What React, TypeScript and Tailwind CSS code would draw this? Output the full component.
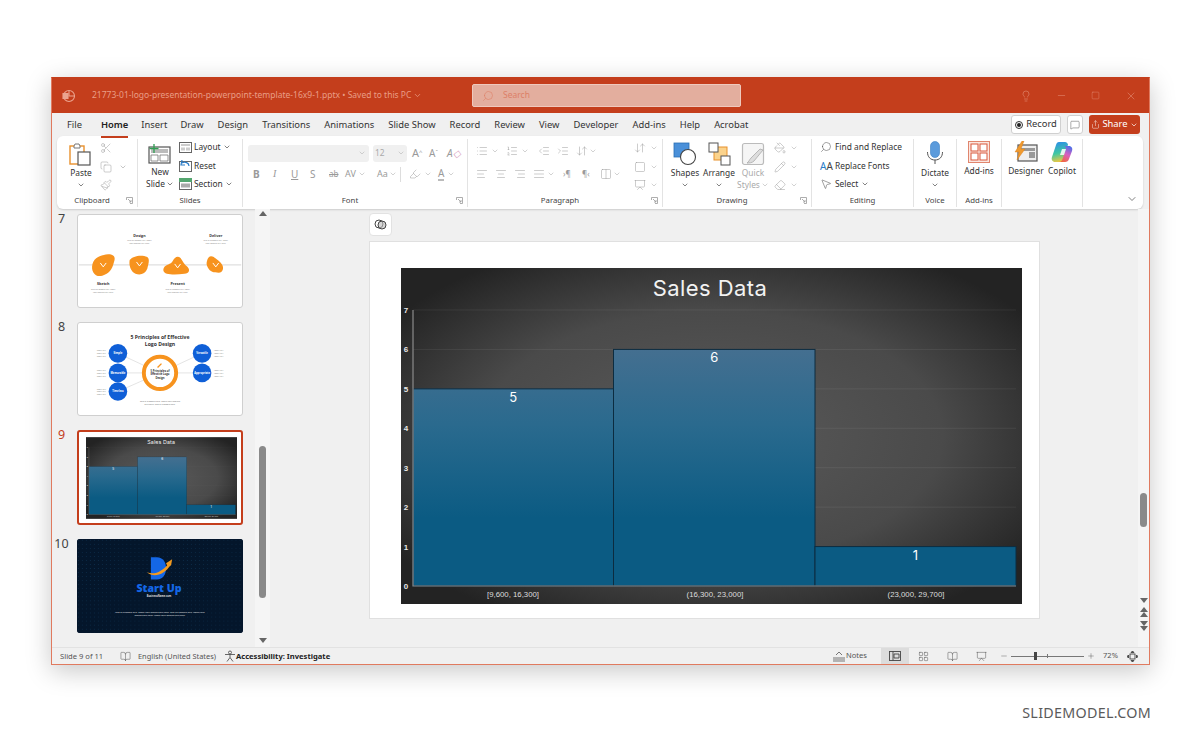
import type { ReactNode } from 'react';
import {
  AlignCenter,
  AlignJustify,
  AlignLeft,
  AlignRight,
  ChevronDown,
  Columns2,
  Copy,
  IndentDecrease,
  IndentIncrease,
  LayoutGrid,
  List,
  ListOrdered,
  MessageSquare,
  Minus,
  MousePointer2,
  Paintbrush,
  Plus,
  Presentation,
  BookOpen,
  Scissors,
  Search,
  Share,
  Square,
  X,
  Lightbulb,
  Eraser,
  PaintBucket,
  Pencil,
  Highlighter,
  ArrowDownUp,
} from 'lucide-react';

const TABS = ['File', 'Home', 'Insert', 'Draw', 'Design', 'Transitions', 'Animations', 'Slide Show', 'Record', 'Review', 'View', 'Developer', 'Add-ins', 'Help', 'Acrobat'];

function Chev({ className = 'text-[#666]' }: { className?: string }) {
  return <ChevronDown size={8} strokeWidth={2} className={`shrink-0 ${className}`} />;
}

function Launcher() {
  return (
    <svg width="7" height="7" viewBox="0 0 7 7" className="absolute right-[4px] bottom-[3px] text-[#999]" fill="none" stroke="currentColor" strokeWidth="0.8">
      <path d="M.5 3V.5h6v6H4M2 2l3 3M5 3v2H3" />
    </svg>
  );
}

function Group({ w, label, launcher, children }: { w: string; label?: string; launcher?: boolean; children: ReactNode }) {
  return (
    <div className={`relative flex h-full shrink-0 flex-col border-r border-[#e3e3e3] ${w}`}>
      <div className="flex min-h-0 flex-1">{children}</div>
      <div className={`h-[12px] -translate-y-[1px] text-center text-[7.800px] leading-[12px] text-[#444] ${launcher ? 'pr-[10px]' : ''}`}>{label}</div>
      {launcher && <Launcher />}
    </div>
  );
}

function Row({ children, className = '' }: { children: ReactNode; className?: string }) {
  return <div className={`flex h-[18.5px] items-center whitespace-nowrap ${className}`}>{children}</div>;
}

function PasteIcon() {
  return (
    <svg width="24" height="24" viewBox="0 0 24 24" fill="none">
      <rect x="1" y="4" width="14" height="18" fill="#fff" stroke="#e8912d" strokeWidth="1.4" />
      <path d="M5 4l1-2h4l1 2v2H5z" fill="#fff" stroke="#777" strokeWidth="1" />
      <rect x="9" y="10" width="12" height="13" fill="#fff" stroke="#555" strokeWidth="1.2" />
    </svg>
  );
}

function NewSlideIcon() {
  return (
    <svg width="24" height="20" viewBox="0 0 24 20" fill="none">
      <rect x="1" y="3" width="21" height="16" fill="#fff" stroke="#555" strokeWidth="1.2" />
      <rect x="3" y="5" width="17" height="4" fill="#bbb" />
      <path d="M3 11h7v6H3zM12 11h8v6h-8z" fill="#fff" stroke="#777" strokeWidth="0.8" />
      <path d="M6 0v9M1.5 4.5h9" stroke="#2f9e52" strokeWidth="1.3" />
    </svg>
  );
}

function SmallSlideIcon({ kind }: { kind: 'layout' | 'reset' | 'section' }) {
  return (
    <svg width="13" height="12" viewBox="0 0 13 12" fill="none">
      <rect x=".5" y="1.500" width="12" height="10" fill="#fff" stroke="#666" />
      {kind === 'layout' && <path d="M2 3h9v2H2zM2 6.500h4v3H2zM7 6.500h4v3H7z" fill="#ccc" />}
      {kind === 'reset' && <path d="M3 0l-1 5 4 0M3 3c3-2 7 0 7 3" stroke="#2a7cc7" strokeWidth="1.2" fill="none" />}
      {kind === 'section' && <path d="M0 0h13v4H0z" fill="#54a66f" />}
      {kind === 'section' && <rect x="2" y="5.500" width="9" height="4" fill="#aaa" />}
    </svg>
  );
}

function ShapesIcon() {
  return (
    <svg width="24" height="24" viewBox="0 0 24 24" fill="none">
      <rect x="1" y="1" width="15" height="14" fill="#4a90d9" stroke="#2a6fb5" strokeWidth="0.8" />
      <circle cx="15" cy="15" r="7.500" fill="#fff" stroke="#444" strokeWidth="1.1" />
    </svg>
  );
}

function ArrangeIcon() {
  return (
    <svg width="24" height="24" viewBox="0 0 24 24" fill="none">
      <rect x="7" y="5" width="13" height="13" fill="#fbd38c" stroke="#e8912d" strokeWidth="1" />
      <rect x="2" y="1" width="9" height="9" fill="#fff" stroke="#555" strokeWidth="1" />
      <rect x="14" y="14" width="9" height="9" fill="#fff" stroke="#555" strokeWidth="1" />
    </svg>
  );
}

function QuickStylesIcon() {
  return (
    <svg width="24" height="24" viewBox="0 0 24 24" fill="none">
      <rect x="1.500" y="1.500" width="21" height="21" rx="2" fill="#f5f5f5" stroke="#bbb" strokeWidth="1.2" />
      <path d="M22 8L13 19c-2 2-5 2-7 2 2-1 2-3 4-5l9-9z" fill="#ddd" stroke="#aaa" strokeWidth="0.8" />
    </svg>
  );
}

function MicIcon() {
  return (
    <svg width="18" height="24" viewBox="0 0 18 24" fill="none">
      <rect x="4.500" y="0.500" width="9" height="16" rx="4.500" fill="#5b9bdc" stroke="#3d7fc2" strokeWidth="0.6" />
      <path d="M1.500 11c0 5 3 8 7.500 8s7.500-3 7.500-8M9 19v4" stroke="#555" strokeWidth="1" />
    </svg>
  );
}

function AddInsIcon() {
  return (
    <svg width="22" height="22" viewBox="0 0 22 22" fill="#fff" stroke="#d9593c" strokeWidth="1">
      <rect x=".5" y=".5" width="21" height="21" fill="#fbe7e1" stroke="#e0866e" />
      <rect x="3" y="3" width="7" height="7" />
      <rect x="12" y="3" width="7" height="7" />
      <rect x="3" y="12" width="7" height="7" />
      <rect x="12" y="12" width="7" height="7" />
    </svg>
  );
}

function DesignerIcon() {
  return (
    <svg width="24" height="22" viewBox="0 0 24 22" fill="none">
      <rect x="4" y="4" width="19" height="16" fill="#eee" stroke="#555" strokeWidth="1.2" />
      <path d="M7 7h14v3H7zM15 11h6v6h-6z" fill="#999" />
      <path d="M8 0L1 11h4l-2 8 8-11H7l3-8z" fill="#ef9a2f" stroke="#d97a16" strokeWidth="0.4" />
    </svg>
  );
}

function CopilotIcon() {
  return (
    <svg width="22" height="22" viewBox="0 0 22 22" fill="none">
      <defs>
        <linearGradient id="cp1" x1="0.3" y1="0" x2="0.5" y2="1">
          <stop offset="0" stopColor="#2c8fe8" />
          <stop offset="0.55" stopColor="#3fc7a2" />
          <stop offset="1" stopColor="#f3c93f" />
        </linearGradient>
        <linearGradient id="cp2" x1="0.7" y1="0" x2="0.3" y2="1">
          <stop offset="0" stopColor="#4f6fe8" />
          <stop offset="0.5" stopColor="#d95fc0" />
          <stop offset="1" stopColor="#f0683c" />
        </linearGradient>
      </defs>
      <path d="M8 1h6c1.500 0 2.500 1 3 2.500L13 18c-.5 2-2 3-4 3H4c-2.500 0-4-2.500-3-5L5 4c.5-2 1.500-3 3-3z" fill="url(#cp1)" />
      <path d="M13 5h5c2.500 0 4 2.500 3 5l-3 8c-.5 2-2 3-4 3H8c1.500 0 3-1 3.500-3L15 8c.2-1-1-3-2-3z" fill="url(#cp2)" />
      <path d="M11 8h4l-2 6H9z" fill="#fff" fillOpacity="0.85" />
    </svg>
  );
}

function Ribbon() {
  const off = 'text-[#9a9a9a]';
  return (
    <div className="mr-[6px] ml-[5px] flex h-[73px] rounded-[6px] bg-white pt-[3px] pb-[2px] text-[8.400px] leading-[12px] shadow-[0_1px_2px_rgba(0,0,0,0.15)]">
      <Group w="w-[81px]" label="Clipboard" launcher>
        <div className="ml-[11px] flex w-[26px] flex-col items-center pt-[3px]">
          <PasteIcon />
          <span className="mt-[1px]">Paste</span>
          <Chev className="mt-[2px] text-[#444]" />
        </div>
        <div className={`ml-[6px] flex flex-col ${off}`}>
          <Row><Scissors size={12} strokeWidth={1} /></Row>
          <Row><Copy size={12} strokeWidth={1} /><Chev className="ml-[7px] text-[#aaa]" /></Row>
          <Row><Paintbrush size={12} strokeWidth={1} /></Row>
        </div>
      </Group>
      <Group w="w-[105px]" label="Slides">
        <div className="ml-[9px] flex w-[26px] flex-col items-center pt-[5px]">
          <NewSlideIcon />
          <span className="mt-[2px]">New</span>
          <span className="flex items-center gap-[1px] whitespace-nowrap">Slide <Chev className="text-[#444]" /></span>
        </div>
        <div className="-mt-[1px] ml-[6px] flex flex-col">
          <Row className="gap-[2px]"><SmallSlideIcon kind="layout" />Layout <Chev className="text-[#444]" /></Row>
          <Row className="gap-[2px]"><SmallSlideIcon kind="reset" />Reset</Row>
          <Row className="gap-[2px]"><SmallSlideIcon kind="section" />Section <Chev className="text-[#444]" /></Row>
        </div>
      </Group>
      <Group w="w-[225px]" label="Font" launcher>
        <div className="flex flex-col pl-[5px]">
          <div className="mt-[5px] flex h-[18px] items-center gap-[4px]">
            <div className="flex h-[17px] w-[121px] items-center justify-end rounded-[3px] bg-[#f0f0f0] pr-[3px]"><Chev className="text-[#bbb]" /></div>
            <div className="flex h-[17px] w-[34px] items-center justify-between rounded-[3px] bg-[#f0f0f0] px-[2px] text-[#aaa]">12<Chev className="text-[#bbb]" /></div>
            <span className={`ml-[1px] w-[13px] text-[11px] ${off}`}>A<sup className="text-[6px]">^</sup></span>
            <span className={`w-[13px] text-[10px] ${off}`}>A<sup className="text-[6px]">ˇ</sup></span>
            <span className={`ml-[1px] w-[14px] text-[10px] italic ${off}`}>A<span className="text-[#d8a0c0]">◇</span></span>
          </div>
          <div className={`mt-[3px] flex h-[18px] items-center text-[10px] ${off}`}>
            <span className="ml-[5px] w-[20px] font-bold">B</span>
            <span className="w-[18px] font-['Liberation_Serif',serif] italic">I</span>
            <span className="w-[19px] underline">U</span>
            <span className="w-[19px]">S</span>
            <span className="w-[16px] text-[8px] line-through">ab</span>
            <span className="flex w-[32px] items-center gap-[2px] text-[9px]">AV<Chev className="text-[#bbb]" /></span>
            <span className="flex w-[23px] items-center gap-[1px] text-[9px]">Aa<Chev className="text-[#bbb]" /></span>
            <span className="mr-[8px] h-[15px] w-px bg-[#ddd]" />
            <Highlighter size={12} strokeWidth={1} />
            <Chev className="mx-[3px] text-[#bbb]" />
            <span className="ml-[3px] border-b-[2px] border-[#bbb] leading-[11px]">A</span>
            <Chev className="ml-[3px] text-[#bbb]" />
          </div>
        </div>
      </Group>
      <Group w="w-[195px]" label="Paragraph" launcher>
        <div className={`flex flex-col pl-[8px] ${off}`}>
          <div className="mt-[3px] flex h-[18px] items-center">
            <List size={12} strokeWidth={1} className="mr-[3px]" /><Chev className="mr-[7px] text-[#bbb]" />
            <ListOrdered size={12} strokeWidth={1} className="mr-[3px]" /><Chev className="mr-[9px] text-[#bbb]" />
            <IndentDecrease size={12} strokeWidth={1} className="mr-[7px]" />
            <IndentIncrease size={12} strokeWidth={1} className="mr-[7px]" />
            <ArrowDownUp size={12} strokeWidth={1} className="mr-[1px]" /><Chev className="text-[#bbb]" />
          </div>
          <div className="mt-[5px] flex h-[18px] items-center">
            <AlignLeft size={12} strokeWidth={1} className="mr-[7px]" />
            <AlignCenter size={12} strokeWidth={1} className="mr-[7px]" />
            <AlignRight size={12} strokeWidth={1} className="mr-[7px]" />
            <AlignJustify size={12} strokeWidth={1} className="mr-[2px]" /><Chev className="mr-[8px] text-[#bbb]" />
            <span className="mr-[9px] w-[10px] text-[8px]">›¶</span>
            <span className="mr-[8px] w-[10px] text-[8px]">¶‹</span>
            <Columns2 size={12} strokeWidth={1} className="mr-[1px]" /><Chev className="text-[#bbb]" />
          </div>
        </div>
        <div className={`ml-[13px] flex flex-col ${off}`}>
          <Row className="gap-[4px]"><ArrowDownUp size={12} strokeWidth={1} /><Chev className="text-[#bbb]" /></Row>
          <Row className="gap-[4px]"><Square size={12} strokeWidth={1} /><Chev className="text-[#bbb]" /></Row>
          <Row className="gap-[4px]"><Presentation size={12} strokeWidth={1} /><Chev className="text-[#bbb]" /></Row>
        </div>
      </Group>
      <Group w="w-[149px]" label="Drawing" launcher>
        <div className="ml-[4px] flex w-[36px] flex-col items-center pt-[3px]">
          <ShapesIcon />
          <span className="mt-[1px]">Shapes</span>
          <Chev className="mt-[2px] text-[#444]" />
        </div>
        <div className="flex w-[32px] flex-col items-center pt-[3px]">
          <ArrangeIcon />
          <span className="mt-[1px]">Arrange</span>
          <Chev className="mt-[2px] text-[#444]" />
        </div>
        <div className="flex w-[36px] flex-col items-center pt-[3px] text-[#aaa]">
          <QuickStylesIcon />
          <span className="mt-[1px]">Quick</span>
          <span className="flex items-center gap-[1px]">Styles <Chev className="text-[#bbb]" /></span>
        </div>
        <div className={`ml-[3px] flex flex-col ${off}`}>
          <Row className="gap-[4px]"><PaintBucket size={12} strokeWidth={1} /><Chev className="text-[#bbb]" /></Row>
          <Row className="gap-[4px]"><Pencil size={12} strokeWidth={1} /><Chev className="text-[#bbb]" /></Row>
          <Row className="gap-[4px]"><Eraser size={12} strokeWidth={1} /><Chev className="text-[#bbb]" /></Row>
        </div>
      </Group>
      <Group w="w-[102px]" label="Editing">
        <div className="-mt-[1px] ml-[8px] flex flex-col">
          <Row className="gap-[3px]"><Search size={12} strokeWidth={1} className="-scale-x-100 text-[#444]" />Find and Replace</Row>
          <Row className="gap-[3px]"><span className="w-[12px] text-[10px] leading-none text-[#2a7cc7]">A<span className="text-[#444]">A</span></span>Replace Fonts</Row>
          <Row className="gap-[3px]"><MousePointer2 size={12} strokeWidth={1} className="text-[#444]" />Select <Chev className="text-[#444]" /></Row>
        </div>
      </Group>
      <Group w="w-[43px]" label="Voice">
        <div className="flex w-full flex-col items-center pt-[2px]">
          <MicIcon />
          <span className="mt-[2px]">Dictate</span>
          <Chev className="mt-[2px] text-[#444]" />
        </div>
      </Group>
      <Group w="w-[45px]" label="Add-ins">
        <div className="flex w-full flex-col items-center pt-[2px]">
          <AddInsIcon />
          <span className="mt-[2px]">Add-ins</span>
        </div>
      </Group>
      <Group w="w-[81px]">
        <div className="ml-[7px] flex w-[34px] flex-col items-center pt-[2px]">
          <DesignerIcon />
          <span className="mt-[2px]">Designer</span>
        </div>
        <div className="ml-[2px] flex w-[34px] flex-col items-center pt-[2px]">
          <CopilotIcon />
          <span className="mt-[2px]">Copilot</span>
        </div>
      </Group>
      <div className="flex flex-1 items-end justify-end pr-[5px] pb-[2px]">
        <ChevronDown size={12} strokeWidth={1.5} className="text-[#555]" />
      </div>
    </div>
  );
}

function Chart({ className }: { className: string }) {
  const bars = [
    { x: 12, w: 200.5, v: 5 },
    { x: 212.5, w: 201.5, v: 6 },
    { x: 414, w: 201, v: 1 },
  ];
  const yOf = (v: number) => 318 - v * 39.43;
  return (
    <svg viewBox="0 0 621 336" className={className}>
      <defs>
        <radialGradient id="chartBg" cx="50%" cy="50%" r="62%">
          <stop offset="0" stopColor="#5a5a5a" />
          <stop offset="0.6" stopColor="#4a4a4a" />
          <stop offset="1" stopColor="#232323" />
        </radialGradient>
        <linearGradient id="barFill" gradientUnits="userSpaceOnUse" x1="0" y1="81" x2="0" y2="250">
          <stop offset="0" stopColor="#446f90" />
          <stop offset="0.45" stopColor="#2a6a8e" />
          <stop offset="1" stopColor="#0b5b83" />
        </linearGradient>
      </defs>
      <rect width="621" height="336" fill="url(#chartBg)" />
      {[1, 2, 3, 4, 5, 6, 7].map((v) => (
        <line key={v} x1="12" x2="615" y1={yOf(v)} y2={yOf(v)} stroke="#fff" strokeOpacity="0.09" strokeWidth="0.8" />
      ))}
      {bars.map((b) => (
        <rect key={b.x} x={b.x} y={yOf(b.v)} width={b.w} height={b.v * 39.43} fill="url(#barFill)" stroke="#0c2c40" strokeWidth="1" />
      ))}
      <path d="M12 42V318H615" fill="none" stroke="#8a8a8a" strokeWidth="1.2" />
      {[0, 1, 2, 3, 4, 5, 6, 7].map((v) => (
        <text key={v} x="5" y={yOf(v) + 3} fontSize="8" fontWeight="700" fill="#e8e8e8" textAnchor="middle" fontFamily="Liberation Sans, sans-serif">
          {v}
        </text>
      ))}
      <text x="309" y="28" fontSize="22" fill="#f2f2f2" textAnchor="middle" letterSpacing="0.4" fontFamily="Inter, sans-serif">
        Sales Data
      </text>
      {bars.map((b) => (
        <text key={b.x} x={b.x + b.w / 2} y={yOf(b.v) + 13} fontSize="13" fill="#fff" textAnchor="middle" fontFamily="Inter, sans-serif">
          {b.v}
        </text>
      ))}
      <text x="112" y="329" fontSize="7.800" fill="#ddd" textAnchor="middle" fontFamily="Liberation Sans, sans-serif">[9,600, 16,300]</text>
      <text x="314" y="329" fontSize="7.800" fill="#ddd" textAnchor="middle" fontFamily="Liberation Sans, sans-serif">(16,300, 23,000]</text>
      <text x="515" y="329" fontSize="7.800" fill="#ddd" textAnchor="middle" fontFamily="Liberation Sans, sans-serif">(23,000, 29,700]</text>
    </svg>
  );
}

function Slide7() {
  const blobs = [
    'M14 50c2-7 8-9 16-10 6 0 8 3 6 8-2 8-5 12-12 14-7 2-12-4-10-12z',
    'M52 46c3-4 12-6 18-3 3 2 1 8 0 12-2 5-7 7-12 5-5-2-7-9-6-14z',
    'M87 54c2-4 7-3 9-7 2-4 5-6 8-3 2 3 4 7 7 9 3 3 2 7-3 7-7 1-14 1-18 0-4-1-4-4-3-6z',
    'M131 47c1-5 4-6 7-4 2 2 5 3 8 7 3 4 1 9-3 9-5 0-9-1-11-5-1-2-2-4-1-7z',
  ];
  const caps = [
    { x: 25, y: 72, t: 'Sketch' },
    { x: 62, y: 22, t: 'Design' },
    { x: 101, y: 72, t: 'Present' },
    { x: 140, y: 22, t: 'Deliver' },
  ];
  return (
    <svg viewBox="0 0 166 94" className="h-full w-full">
      <line x1="0" x2="166" y1="51" y2="51" stroke="#ccc" strokeWidth="0.8" />
      {blobs.map((d) => (
        <path key={d} d={d} fill="#f7931e" />
      ))}
      {[[25, 51], [62, 50], [101, 52], [140, 51]].map(([x, y]) => (
        <path key={x} d={`M${x - 3} ${y - 2}l3 4 3-4`} fill="none" stroke="#fff" strokeWidth="1" />
      ))}
      {caps.map((c) => (
        <g key={c.t} textAnchor="middle" fontFamily="Open Sans, sans-serif">
          <text x={c.x} y={c.y} fontSize="3.800" fontWeight="700" fill="#333">{c.t}</text>
          <text x={c.x} y={c.y + 5} fontSize="2" fill="#777">This is a sample text. Insert</text>
          <text x={c.x} y={c.y + 8} fontSize="2" fill="#777">your desired text here.</text>
        </g>
      ))}
    </svg>
  );
}

function Slide8() {
  const nodes = [
    { x: 40, y: 31, t: 'Simple' },
    { x: 40, y: 51, t: 'Memorable' },
    { x: 40, y: 70, t: 'Timeless' },
    { x: 126, y: 31, t: 'Versatile' },
    { x: 126, y: 51, t: 'Appropriate' },
  ];
  return (
    <svg viewBox="0 0 166 94" className="h-full w-full" fontFamily="Open Sans, sans-serif">
      <text x="83" y="16" fontSize="5.200" fontWeight="700" fill="#333" textAnchor="middle">5 Principles of Effective</text>
      <text x="83" y="23" fontSize="5.200" fontWeight="700" fill="#333" textAnchor="middle">Logo Design</text>
      {nodes.map((n) => (
        <line key={n.t} x1={n.x} y1={n.y} x2="83" y2="51" stroke="#ddd" strokeWidth="0.8" />
      ))}
      <circle cx="83" cy="51" r="16.500" fill="#fff" stroke="#f7931e" strokeWidth="4" />
      <text x="83" y="50" fontSize="2.800" fontWeight="700" fill="#333" textAnchor="middle">5 Principles of</text>
      <text x="83" y="53.500" fontSize="2.800" fontWeight="700" fill="#333" textAnchor="middle">Effective Logo</text>
      <text x="83" y="57" fontSize="2.800" fontWeight="700" fill="#333" textAnchor="middle">Design</text>
      <path d="M80 45l4-4 1 1-4 4z" fill="#f7931e" />
      {nodes.map((n) => (
        <g key={n.t}>
          <circle cx={n.x} cy={n.y} r="9.500" fill="#0f5fd7" />
          <text x={n.x} y={n.y + 1} fontSize="2.700" fontWeight="700" fill="#fff" textAnchor="middle">{n.t}</text>
          {[-3, 0, 3].map((d) => (
            <text key={d} x={n.x < 83 ? 23 : 143} y={n.y + d + 1} fontSize="2" fill="#777" textAnchor="middle">Insert text</text>
          ))}
        </g>
      ))}
      <text x="83" y="81" fontSize="2.200" fill="#666" textAnchor="middle">This is a sample text. Insert your desired</text>
      <text x="83" y="84" fontSize="2.200" fill="#666" textAnchor="middle">text here. This is a sample text.</text>
    </svg>
  );
}

function Slide10() {
  return (
    <svg viewBox="0 0 164 93" className="h-full w-full" fontFamily="Open Sans, sans-serif">
      <defs>
        <pattern id="dots" width="4" height="4" patternUnits="userSpaceOnUse">
          <circle cx="1" cy="1" r="0.3" fill="#1c5a86" />
        </pattern>
      </defs>
      <rect width="164" height="93" fill="#04162b" />
      <rect width="164" height="93" fill="url(#dots)" />
      <path d="M73 18h6c6 0 9 5 9 11 0 6-3 11-9 11h-6z" fill="#1467e6" />
      <path d="M69 33c8 3 15-1 21-8l2 1c-5 9-16 13-23 7z" fill="#f39a1f" />
      <path d="M88 24l6-4-1 6-3 2z" fill="#f39a1f" />
      <text x="81" y="52" fontSize="10.500" fontWeight="800" fill="#1467e6" textAnchor="middle">Start Up</text>
      <text x="81" y="57" fontSize="2.500" fontWeight="700" fill="#ddd" textAnchor="middle">BusinessName.com</text>
      <text x="82" y="73" fontSize="2.300" fill="#eee" textAnchor="middle">This is a sample text. Insert your desired text here. This is a sample text. Insert your</text>
      <text x="82" y="76.500" fontSize="2.300" fill="#eee" textAnchor="middle">desired text here. Insert your desired text here.</text>
    </svg>
  );
}

function Thumb({ n, active, children, frame = 'h-[94px]' }: { n: number; active?: boolean; children: ReactNode; frame?: string }) {
  return (
    <div className="flex shrink-0">
      <span className={`-mt-[2px] mr-[6px] w-[19px] shrink-0 text-center text-[12.500px] leading-[14px] ${active ? 'text-[#c43e1c]' : 'text-[#444]'}`}>{n}</span>
      <div className={`w-[166px] overflow-hidden rounded-[3px] ${frame} ${active ? 'border-2 border-[#c43e1c] bg-white' : n === 10 ? 'bg-[#04162b]' : 'border border-[#cfcfcf] bg-white'}`}>
        {children}
      </div>
    </div>
  );
}

function Triangle({ up = false }: { up?: boolean }) {
  return (
    <svg width="8" height="5" viewBox="0 0 8 5" className="shrink-0 text-[#666]">
      <path d={up ? 'M4 0l4 5H0z' : 'M0 0h8L4 5z'} fill="currentColor" />
    </svg>
  );
}

function SlidePanel() {
  return (
    <div className="flex w-[218px] shrink-0">
      <div className="flex h-full w-[203px] flex-col gap-[14px] overflow-hidden pt-[5px]">
        <Thumb n={7}><Slide7 /></Thumb>
        <Thumb n={8}><Slide8 /></Thumb>
        <Thumb n={9} active frame="h-[95px]">
          <div className="flex h-full justify-center pt-[5px] pl-[3px]">
            <Chart className="h-[82px] w-[151px]" />
          </div>
        </Thumb>
        <Thumb n={10}><Slide10 /></Thumb>
        <Thumb n={11}><div className="h-[2px] bg-[#4f7c99]" /></Thumb>
      </div>
      <div className="flex w-[15px] flex-col items-center bg-[#f5f5f5] pt-[2px] pb-[4px]">
        <Triangle up />
        <div className="mt-[230px] h-[152px] w-[7px] rounded-full bg-[#8a8a8a]" />
        <div className="mt-auto"><Triangle /></div>
      </div>
    </div>
  );
}

function Editor() {
  return (
    <div className="flex min-w-0 flex-1 flex-col pt-[4px] pl-[99px]">
      <div className="flex h-[23px] w-[23px] items-center justify-center rounded-[4px] border border-[#e2e2e2] bg-white">
        <svg width="13" height="13" viewBox="0 0 13 13" fill="none" stroke="#444" strokeWidth="1">
          <circle cx="5" cy="6" r="4" />
          <circle cx="8" cy="7" r="4" fill="#bbb" fillOpacity="0.6" />
        </svg>
      </div>
      <div className="mt-[5px] h-[378px] w-[671px] border border-[#e0e0e0] bg-white pt-[26px] pl-[31px]">
        <Chart className="h-[336px] w-[621px]" />
      </div>
    </div>
  );
}

function StatusBar() {
  return (
    <div className="flex h-[17px] items-center border-t border-[#e2e2e2] bg-[#f0f0f0] text-[7.600px] text-[#555]">
      <span className="ml-[8px] w-[62px] translate-y-[1px]">Slide 9 of 11</span>
      <BookOpen size={11} strokeWidth={1} className="-ml-[2px] text-[#444]" />
      <span className="ml-[7px] w-[88px] translate-y-[1px] text-[7.400px] whitespace-nowrap">English (United States)</span>
      <svg width="12" height="12" viewBox="0 0 12 12" fill="none" stroke="#444" strokeWidth="0.8" className="-ml-[2px]">
        <circle cx="6" cy="2.500" r="1.500" />
        <path d="M1 4.500h10M6 4.500v3l-3 4M6 7.500l3 4" />
      </svg>
      <span className="translate-y-[1px] font-bold whitespace-nowrap text-[#222]">Accessibility: Investigate</span>
      <div className="ml-auto flex h-full items-center pr-[11px]">
        <svg width="12" height="11" viewBox="0 0 12 11" fill="none" stroke="#555" strokeWidth="0.8">
          <path d="M0 7h12M0 9h12M0 11h12M3 4l3-3 3 3" />
        </svg>
        <span className="mr-[14px] ml-[1px]">Notes</span>
        <div className="flex h-full w-[28px] items-center justify-center bg-[#dcdcdc]">
          <svg width="12" height="10" viewBox="0 0 12 10" fill="none" stroke="#444" strokeWidth="0.9">
            <rect x=".5" y=".5" width="11" height="9" />
            <path d="M4 .5v9M5 3h5v4H5z" />
          </svg>
        </div>
        <LayoutGrid size={11} strokeWidth={1} className="ml-[9px] text-[#444]" />
        <BookOpen size={11} strokeWidth={1} className="ml-[18px] text-[#444]" />
        <Presentation size={11} strokeWidth={1} className="ml-[18px] text-[#444]" />
        <Minus size={8} strokeWidth={1.2} className="ml-[13px] text-[#444]" />
        <div className="relative mx-[3px] flex h-full w-[73px] items-center">
          <div className="h-px w-full bg-[#777]" />
          <div className="absolute top-[4px] left-[23px] h-[8px] w-[3px] bg-[#444]" />
          <div className="absolute top-[6px] left-[36px] h-[4px] w-px bg-[#777]" />
        </div>
        <Plus size={8} strokeWidth={1.2} className="text-[#444]" />
        <span className="ml-[8px] w-[20px]">72%</span>
        <svg width="11" height="11" viewBox="0 0 11 11" fill="none" stroke="#444" strokeWidth="0.9" className="ml-[4px]">
          <rect x="3" y="3" width="5" height="5" />
          <path d="M5.500 0L4 1.500h3zM5.500 11L4 9.500h3zM0 5.500L1.500 4v3zM11 5.500L9.500 4v3z" fill="#444" />
        </svg>
      </div>
    </div>
  );
}

export default function App() {
  return (
    <div className="flex h-[743px] w-[1200px] flex-col overflow-hidden bg-white pt-[77px] pl-[51px] font-['Noto_Sans','Open_Sans',sans-serif] text-[#333]">
      <div className="flex h-[588px] w-[1099px] flex-col border border-[#e07a5f] border-t-[#c43e1c] bg-[#f0f0f0] shadow-[0_6px_24px_rgba(0,0,0,0.22)]">
        <div className="flex h-[35px] shrink-0 items-center bg-[#c43e1c] text-[8.500px] text-[#e99d86]">
          <svg width="14" height="14" viewBox="0 0 14 14" fill="none" stroke="#eba48f" strokeWidth="1.1" className="ml-[10px]">
            <circle cx="7" cy="7" r="5.500" />
            <path d="M7 1.500V7h5.500" />
            <rect x="1" y="4.500" width="5" height="5" fill="#eba48f" />
          </svg>
          <span className="ml-[16px] flex w-[380px] items-center gap-[2px] whitespace-nowrap">
            21773-01-logo-presentation-powerpoint-template-16x9-1.pptx • Saved to this PC
            <ChevronDown size={9} />
          </span>
          <div className="flex h-[23px] w-[269px] items-center rounded-[2px] border border-[#efc9bd] bg-[#e3ae9e] pl-[9px] text-[#dd8067]">
            <Search size={12} strokeWidth={1.2} className="-scale-x-100" />
            <span className="ml-[9px]">Search</span>
          </div>
          <div className="ml-auto flex items-center gap-[23px] pr-[12px]">
            <Lightbulb size={12} strokeWidth={1} />
            <Minus size={11} strokeWidth={1} className="ml-[1px]" />
            <Square size={9} strokeWidth={1} className="mx-[1px]" />
            <X size={12} strokeWidth={1} className="ml-[1px]" />
          </div>
        </div>
        <div className="flex h-[23px] shrink-0 items-center gap-[14px] pl-[15px] text-[9.400px] text-[#333]">
          {TABS.map((tab) => (
            <span key={tab} className={`relative translate-y-[1px] whitespace-nowrap ${tab === 'File' ? 'mr-[5px]' : ''} ${tab === 'Home' ? '-mr-[1px] font-semibold text-[#222]' : ''} ${tab === 'Insert' ? '-mr-[1px]' : ''}`}>
              {tab}
              {tab === 'Home' && <span className="absolute right-0 -bottom-[5px] left-0 h-[2px] bg-[#c43e1c]" />}
            </span>
          ))}
          <div className="mr-[9px] ml-auto flex items-center gap-[6px]">
            <span className="flex h-[19px] w-[50px] items-center justify-center gap-[3px] rounded-[3px] border border-[#d0d0d0] bg-white">
              <span className="flex h-[8px] w-[8px] items-center justify-center rounded-full border border-[#333]"><span className="h-[4px] w-[4px] rounded-full bg-[#222]" /></span>Record
            </span>
            <span className="flex h-[19px] w-[16px] items-center justify-center rounded-[3px] border border-[#d0d0d0] bg-white">
              <MessageSquare size={10} strokeWidth={1} />
            </span>
            <span className="flex h-[19px] w-[51px] items-center justify-center gap-[2px] rounded-[3px] bg-[#c43e1c] text-white">
              <Share size={9} strokeWidth={1.2} />Share<ChevronDown size={8} />
            </span>
          </div>
        </div>
        <Ribbon />
        <div className="flex min-h-0 flex-1">
          <SlidePanel />
          <Editor />
          <div className="flex w-[11px] shrink-0 flex-col items-center bg-[#f5f5f5] pb-[16px]">
            <div className="mt-[284px] h-[34px] w-[7px] rounded-full bg-[#8a8a8a]" />
            <div className="mt-auto flex flex-col items-center gap-[4px]">
              <Triangle />
              <span className="flex flex-col"><Triangle up /><Triangle up /></span>
              <span className="flex flex-col"><Triangle /><Triangle /></span>
            </div>
          </div>
        </div>
        <StatusBar />
      </div>
      <div className="mt-[40px] w-[1100px] text-right text-[14.300px] leading-[16px] tracking-[0.3px] text-[#5a5a5a]">SLIDEMODEL.COM</div>
    </div>
  );
}
